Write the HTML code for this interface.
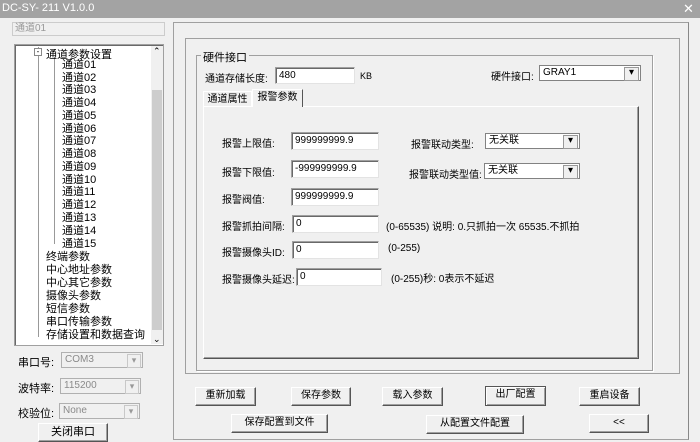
<!DOCTYPE html>
<html><head><meta charset="utf-8"><style>
*{box-sizing:border-box;margin:0;padding:0}
body{width:700px;height:442px;background:#f0f0f0;position:relative;overflow:hidden;font-family:"Liberation Sans","Noto Sans CJK SC",sans-serif;font-size:11px;color:#000}
.a{position:absolute;white-space:nowrap}
.inp{position:absolute;background:#fff;border:1px solid #a0a0a0;border-bottom-color:#e3e3e3;border-right-color:#e3e3e3;box-shadow:inset 1px 1px 0 #696969;font-size:10px;padding:2px 3px;line-height:12px}
.cb{position:absolute;background:#fff;border:1px solid #828282;font-size:10px;padding:1px 3px;line-height:12px}
.cb:after{content:"▾";position:absolute;right:1px;top:1px;width:13px;height:12px;background:#f0f0f0;border:1px solid #999;font-size:10px;line-height:10px;text-align:center}
.cbd{position:absolute;background:#f0f0f0;border:1px solid #b0b0b0;color:#8a8a8a;font-size:10px;padding:1px 3px;line-height:12px}
.cbd:after{content:"▾";position:absolute;right:1px;top:1px;width:12px;height:12px;border:1px solid #c8c8c8;font-size:9px;line-height:10px;text-align:center;color:#999}
.btn{position:absolute;background:#f0f0f0;border:1px solid;border-color:#fff #555 #555 #fff;box-shadow:inset -1px -1px 0 #a0a0a0;text-align:center;font-size:10px;line-height:16px}
.t{position:absolute;left:62px;font-size:11px;line-height:12px}
.l{position:absolute;white-space:nowrap;font-size:10px}
</style></head><body>
<div class="a" style="left:0;top:0;width:700px;height:18px;background:#a3a3a3"></div>
<div class="a" style="left:2px;top:2px;color:#fff;font-size:11px">DC-SY- 211 V1.0.0</div>
<div class="a" style="left:683px;top:1px;color:#fff;font-size:13px">✕</div>
<div class="a" style="left:12px;top:22px;width:153px;height:14px;border:1px solid #ccc;background:#f0f0f0;color:#999;font-size:10px;padding-left:2px;line-height:12px">通道01</div>
<div class="a" style="left:14px;top:44px;width:150px;height:302px;background:#fff;border:1px solid #a0a0a0;box-shadow:inset 1px 1px 0 #696969"></div>
<div class="a" style="left:151px;top:46px;width:12px;height:298px;background:#f0f0f0"></div>
<div class="a" style="left:152px;top:90px;width:10px;height:240px;background:#cdcdcd"></div>
<div class="a" style="left:153px;top:46px;font-size:9px">⌃</div>
<div class="a" style="left:153px;top:334px;font-size:9px">⌄</div>
<div class="a" style="left:38px;top:47px;width:1px;height:290px;border-left:1px solid #999"></div>
<div class="a" style="left:54px;top:58px;width:1px;height:186px;border-left:1px solid #999"></div>
<div class="a" style="left:34px;top:48px;width:8px;height:8px;border:1px solid #888;background:#fff;font-size:8px;line-height:6px;text-align:center">-</div>
<div class="a" style="left:46px;top:46px">通道参数设置</div>
<div class="t" style="top:59px">通道01</div><div class="t" style="top:72px">通道02</div><div class="t" style="top:84px">通道03</div><div class="t" style="top:97px">通道04</div><div class="t" style="top:110px">通道05</div><div class="t" style="top:123px">通道06</div><div class="t" style="top:135px">通道07</div><div class="t" style="top:148px">通道08</div><div class="t" style="top:161px">通道09</div><div class="t" style="top:174px">通道10</div><div class="t" style="top:186px">通道11</div><div class="t" style="top:199px">通道12</div><div class="t" style="top:212px">通道13</div><div class="t" style="top:225px">通道14</div><div class="t" style="top:238px">通道15</div>
<div class="t" style="left:46px;top:251px">终端参数</div><div class="t" style="left:46px;top:264px">中心地址参数</div><div class="t" style="left:46px;top:277px">中心其它参数</div><div class="t" style="left:46px;top:290px">摄像头参数</div><div class="t" style="left:46px;top:303px">短信参数</div><div class="t" style="left:46px;top:316px">串口传输参数</div><div class="t" style="left:46px;top:329px">存储设置和数据查询</div>
<div class="l" style="left:18px;top:354px;font-size:11px">串口号:</div><div class="cbd" style="left:61px;top:352px;width:82px;height:16px">COM3</div>
<div class="l" style="left:18px;top:380px;font-size:11px">波特率:</div><div class="cbd" style="left:60px;top:378px;width:81px;height:16px">115200</div>
<div class="l" style="left:18px;top:405px;font-size:11px">校验位:</div><div class="cbd" style="left:59px;top:403px;width:81px;height:16px">None</div>
<div class="btn" style="left:38px;top:423px;width:70px;height:19px;font-size:11px">关闭串口</div>
<div class="a" style="left:173px;top:22px;width:516px;height:418px;border:1px solid #a0a0a0;border-right-color:#888"></div>
<div class="a" style="left:185px;top:38px;width:495px;height:336px;border:1px solid #a0a0a0"></div>
<div class="a" style="left:196px;top:55px;width:457px;height:316px;border:1px solid #a0a0a0;box-shadow:1px 1px 0 #fff"></div>
<div class="a" style="left:201px;top:49px;background:#f0f0f0;padding:0 2px">硬件接口</div>
<div class="l" style="left:205px;top:70px">通道存储长度:</div><div class="inp" style="left:275px;top:67px;width:80px;height:17px">480</div>
<div class="l" style="left:360px;top:71px;font-size:9px">KB</div>
<div class="l" style="left:491px;top:68px">硬件接口:</div><div class="cb" style="left:539px;top:65px;width:102px;height:16px">GRAY1</div>
<div class="a" style="left:203px;top:106px;width:436px;height:253px;border:1px solid #fff;border-right-color:#555;border-bottom-color:#555;box-shadow:inset -1px -1px 0 #a0a0a0"></div>
<div class="a" style="left:203px;top:91px;width:49px;height:16px;border:1px solid #fff;border-bottom:none;text-align:center;line-height:16px;font-size:10px">通道属性</div>
<div class="a" style="left:252px;top:89px;width:51px;height:18px;border:1px solid #fff;border-right-color:#555;border-bottom:none;background:#f0f0f0;text-align:center;line-height:16px;font-size:10px">报警参数</div>
<div class="l" style="left:222px;top:135px">报警上限值:</div><div class="inp" style="left:291px;top:132px;width:88px;height:18px">999999999.9</div>
<div class="l" style="left:222px;top:164px">报警下限值:</div><div class="inp" style="left:291px;top:160px;width:88px;height:18px">-999999999.9</div>
<div class="l" style="left:222px;top:191px">报警阀值:</div><div class="inp" style="left:291px;top:188px;width:88px;height:18px">999999999.9</div>
<div class="l" style="left:222px;top:218px">报警抓拍间隔:</div><div class="inp" style="left:292px;top:215px;width:87px;height:18px">0</div>
<div class="l" style="left:222px;top:244px">报警摄像头ID:</div><div class="inp" style="left:292px;top:241px;width:87px;height:18px">0</div>
<div class="l" style="left:222px;top:271px">报警摄像头延迟:</div><div class="inp" style="left:296px;top:268px;width:86px;height:18px">0</div>
<div class="l" style="left:386px;top:218px">(0-65535) 说明: 0.只抓拍一次 65535.不抓拍</div>
<div class="l" style="left:388px;top:243px">(0-255)</div>
<div class="l" style="left:391px;top:270px">(0-255)秒: 0表示不延迟</div>
<div class="l" style="left:411px;top:136px">报警联动类型:</div><div class="cb" style="left:485px;top:133px;width:95px;height:16px">无关联</div>
<div class="l" style="left:409px;top:166px">报警联动类型值:</div><div class="cb" style="left:484px;top:163px;width:96px;height:16px">无关联</div>
<div class="btn" style="left:195px;top:387px;width:61px;height:19px">重新加载</div>
<div class="btn" style="left:291px;top:387px;width:60px;height:19px">保存参数</div>
<div class="btn" style="left:382px;top:387px;width:61px;height:19px">载入参数</div>
<div class="btn" style="left:485px;top:386px;width:61px;height:20px;border-color:#555;box-shadow:inset 1px 1px 0 #fff,inset -1px -1px 0 #a0a0a0">出厂配置</div>
<div class="btn" style="left:579px;top:387px;width:61px;height:19px">重启设备</div>
<div class="btn" style="left:231px;top:414px;width:97px;height:19px">保存配置到文件</div>
<div class="btn" style="left:426px;top:415px;width:98px;height:19px">从配置文件配置</div>
<div class="btn" style="left:589px;top:414px;width:60px;height:19px">&lt;&lt;</div>
</body></html>
